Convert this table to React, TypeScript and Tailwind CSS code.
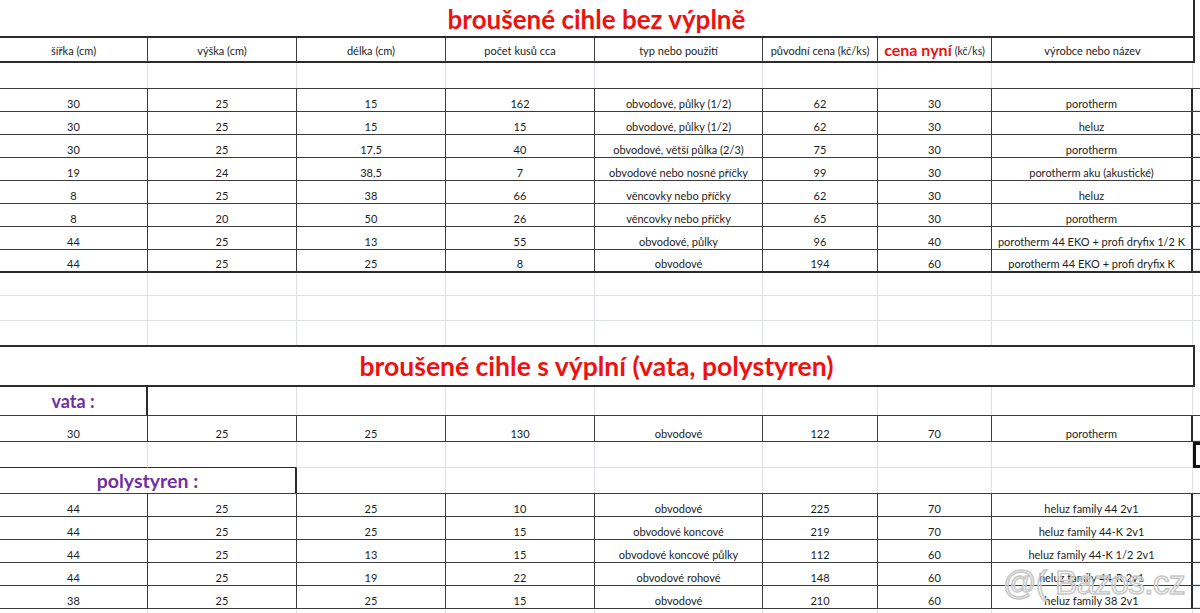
import React from "react";

const W = ["w-[148px]", "w-[149px]", "w-[149px]", "w-[149px]", "w-[168px]", "w-[115px]", "w-[114px]", "w-[201px]"];

const first: string[][] = [
  ["30", "25", "15", "162", "obvodové, půlky (1/2)", "62", "30", "porotherm"],
  ["30", "25", "15", "15", "obvodové, půlky (1/2)", "62", "30", "heluz"],
  ["30", "25", "17,5", "40", "obvodové, větší půlka (2/3)", "75", "30", "porotherm"],
  ["19", "24", "38,5", "7", "obvodové nebo nosné příčky", "99", "30", "porotherm aku (akustické)"],
  ["8", "25", "38", "66", "věncovky nebo příčky", "62", "30", "heluz"],
  ["8", "20", "50", "26", "věncovky nebo příčky", "65", "30", "porotherm"],
  ["44", "25", "13", "55", "obvodové, půlky", "96", "40", "porotherm 44 EKO + profi dryfix 1/2 K"],
  ["44", "25", "25", "8", "obvodové", "194", "60", "porotherm 44 EKO + profi dryfix K"],
];

const vata = ["30", "25", "25", "130", "obvodové", "122", "70", "porotherm"];

const poly: string[][] = [
  ["44", "25", "25", "10", "obvodové", "225", "70", "heluz family 44 2v1"],
  ["44", "25", "25", "15", "obvodové koncové", "219", "70", "heluz family 44-K 2v1"],
  ["44", "25", "13", "15", "obvodové koncové půlky", "112", "60", "heluz family 44-K 1/2 2v1"],
  ["44", "25", "19", "22", "obvodové rohové", "148", "60", "heluz family 44-R 2v1"],
  ["38", "25", "25", "15", "obvodové", "210", "60", "heluz family 38 2v1"],
];

const headers = ["šířka (cm)", "výška (cm)", "délka (cm)", "počet kusů cca", "typ nebo použití", "původní cena (kč/ks)"];

function EmptyRow({ h, last = false }: { h: string; last?: boolean }) {
  return (
    <div className={`flex ${h} ${last ? "" : "border-b border-[#dde1e6]"}`}>
      {W.map((w, i) => (
        <div key={i} className={`${w} shrink-0 border-r border-[#dde1e6]`} />
      ))}
      <div className="flex-1" />
    </div>
  );
}

function DataRow({ cells, h = "h-[23px]", bottom = "border-b border-[#3c3c3c]" }: { cells: string[]; h?: string; bottom?: string }) {
  return (
    <div className={`flex ${h} ${bottom}`}>
      {cells.map((c, i) => (
        <div
          key={i}
          className={`${W[i]} shrink-0 flex items-end justify-center border-r ${
            i === 7 ? "border-r-2 border-[#2b2b2b]" : "border-[#3c3c3c]"
          }`}
        >
          <span className="leading-[14px] whitespace-nowrap">{c}</span>
        </div>
      ))}
      <div className="flex-1 border-b border-[#dde1e6]" />
    </div>
  );
}

export default function App() {
  return (
    <div
      className="relative w-[1200px] h-[613px] overflow-hidden bg-white text-[#1d1d1d] text-[11px]"
      style={{ fontFamily: "Lato, 'Open Sans', sans-serif" }}
    >
      {/* nadpis 1 */}
      <div className="flex h-[36px]">
        <div className="w-[1195px] shrink-0 flex items-center justify-center border-r-2 border-[#2b2b2b]">
          <span className="text-[26px] font-bold text-[#ee1111] leading-none pt-[1px]">broušené cihle bez výplně</span>
        </div>
        <div className="flex-1" />
      </div>

      {/* hlavička */}
      <div className="flex h-[27px]">
        <div className="flex w-[1195px] shrink-0 border-y-2 border-r-2 border-[#2b2b2b]">
          {headers.map((t, i) => (
            <div key={i} className={`${W[i]} shrink-0 flex items-end justify-center pb-[3px] border-r border-[#3c3c3c]`}>
              <span className="whitespace-nowrap leading-[14px]">{t}</span>
            </div>
          ))}
          <div className={`${W[6]} shrink-0 flex items-end justify-center pb-[2px] border-r border-[#3c3c3c] whitespace-nowrap`}>
            <span className="text-[16px] font-bold text-[#ee1111] leading-[18px]">cena nyní</span>
            <span className="ml-[3px] leading-[16px] text-[10.5px]">(kč/ks)</span>
          </div>
          <div className="flex-1 flex items-end justify-center pb-[3px]">
            <span className="leading-[14px]">výrobce nebo název</span>
          </div>
        </div>
        <div className="flex-1" />
      </div>

      <div className="flex h-[26px] border-b border-[#3c3c3c]">
        {W.map((w, i) => (
          <div key={i} className={`${w} shrink-0 border-r border-[#dde1e6]`} />
        ))}
        <div className="flex-1" />
      </div>

      {first.map((r, i) => (
        <DataRow key={i} cells={r} bottom={i === first.length - 1 ? "border-b-2 border-[#2b2b2b]" : "border-b border-[#3c3c3c]"} />
      ))}

      <EmptyRow h="h-[23px]" />
      <EmptyRow h="h-[25px]" />
      <EmptyRow h="h-[24px]" last />

      {/* nadpis 2 */}
      <div className="flex h-[42px]">
        <div className="w-[1195px] shrink-0 flex items-center justify-center border-2 border-l-0 border-[#2b2b2b]">
          <span className="text-[26.5px] font-bold text-[#ee1111] leading-none">broušené cihle s výplní (vata, polystyren)</span>
        </div>
        <div className="flex-1" />
      </div>

      {/* vata */}
      <div className="flex h-[29px] border-b border-[#3c3c3c]">
        <div className={`${W[0]} shrink-0 flex items-center justify-center border-r-2 border-[#2b2b2b]`}>
          <span className="text-[18px] font-bold text-[#7030a0] leading-none">vata :</span>
        </div>
        {W.slice(1).map((w, i) => (
          <div key={i} className={`${w} shrink-0 border-r border-[#dde1e6]`} />
        ))}
        <div className="flex-1" />
      </div>
      <DataRow cells={vata} h="h-[26px]" />

      <div className="flex h-[26px]">
        {W.map((w, i) => (
          <div
            key={i}
            className={`${w} shrink-0 border-r border-[#dde1e6] ${i < 2 ? "border-b border-b-[#2b2b2b]" : "border-b border-b-[#dde1e6]"}`}
          />
        ))}
        <div className="flex-1 border-y-[3px] border-l-[3px] border-[#111]" />
      </div>

      {/* polystyren */}
      <div className="flex h-[26px] border-b border-[#3c3c3c]">
        <div className="w-[297px] shrink-0 flex items-center justify-center border-r-2 border-[#2b2b2b]">
          <span className="text-[19.5px] font-bold text-[#7030a0] leading-none">polystyren :</span>
        </div>
        {W.slice(2).map((w, i) => (
          <div key={i} className={`${w} shrink-0 border-r border-[#dde1e6]`} />
        ))}
        <div className="flex-1" />
      </div>

      {poly.map((r, i) => (
        <DataRow key={i} cells={r} />
      ))}
      <EmptyRow h="h-[6px]" last />

      {/* vodoznak */}
      <div
        className="absolute left-[1003px] top-[566px] text-[33px] tracking-[-0.5px] leading-none whitespace-nowrap text-[rgba(255,255,255,0.3)] [-webkit-text-stroke:1.5px_#c8c8c8]"
        style={{ fontFamily: "'Liberation Sans', sans-serif" }}
      >
        @( Bazos.cz
      </div>
    </div>
  );
}
